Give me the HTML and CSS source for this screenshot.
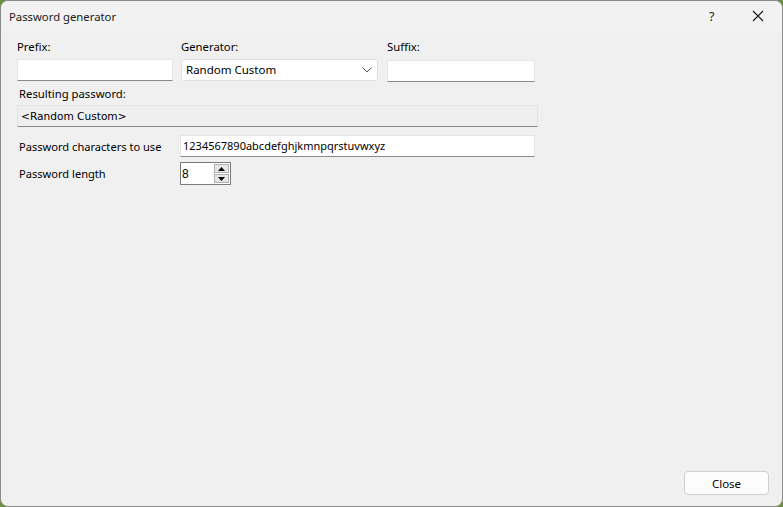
FILE: index.html
```html
<!DOCTYPE html>
<html>
<head>
<meta charset="utf-8">
<link rel="stylesheet" href="styles.css">
</head>
<body>
<div class="window">
  <div class="titlebar">
    <span class="title">Password generator</span>
    <span class="help">?</span>
    <span class="close-x">
      <svg width="12" height="12" viewBox="0 0 12 12"><path d="M1 1 L11 11 M11 1 L1 11" stroke="#1a1a1a" stroke-width="1.1" fill="none"/></svg>
    </span>
  </div>
  <div class="content">
    <div class="top-grid">
      <label class="lbl">Prefix:</label>
      <label class="lbl">Generator:</label>
      <label class="lbl">Suffix:</label>
      <div class="field"></div>
      <div class="combo"><span>Random Custom</span>
        <svg class="chev" width="10" height="6" viewBox="0 0 10 6"><path d="M0.5 0.5 L5 5 L9.5 0.5" stroke="#555" stroke-width="1" fill="none"/></svg>
      </div>
      <div class="field suffix"></div>
    </div>
    <div class="lbl result-lbl">Resulting password:</div>
    <div class="result">&lt;Random Custom&gt;</div>
    <div class="row chars-row">
      <span class="row-lbl">Password characters to use</span>
      <div class="field chars">1234567890abcdefghjkmnpqrstuvwxyz</div>
    </div>
    <div class="row len-row">
      <span class="row-lbl">Password length</span>
      <div class="spinner">
        <span class="spin-val">8</span>
        <div class="spin-btns">
          <div class="spin-btn"><svg width="7" height="4" viewBox="0 0 7 4"><path d="M0 4 L3.5 0 L7 4 Z" fill="#000"/></svg></div>
          <div class="spin-btn"><svg width="7" height="4" viewBox="0 0 7 4"><path d="M0 0 L3.5 4 L7 0 Z" fill="#000"/></svg></div>
        </div>
      </div>
    </div>
    <div class="footer">
      <button class="btn">Close</button>
    </div>
  </div>
</div>
</body>
</html>
```
FILE: styles.css
```css
html, body {
  margin: 0;
  padding: 0;
  background: #6f8f3a;
}
.window {
  box-sizing: border-box;
  width: 783px;
  height: 507px;
  background: #f0f0f0;
  border: 1px solid #8c8c8c;
  border-radius: 8px;
  overflow: hidden;
  display: flex;
  flex-direction: column;
  font-family: "Noto Sans", "Open Sans", sans-serif;
  font-size: 11.2px;
  color: #000;
}
.titlebar {
  height: 30px;
  display: flex;
  align-items: center;
  padding-left: 8px;
  background: #f2f2f2;
}
.title {
  flex: 1;
  font-size: 11.3px;
  color: #1a1a1a;
}
.help {
  width: 12px;
  font-size: 12.5px;
  color: #1a1a1a;
  margin-right: 31px;
}
.close-x {
  display: flex;
  margin-right: 18px;
}
.content {
  flex: 1;
  display: flex;
  flex-direction: column;
  padding: 8px 13px 11px 16px;
}
.top-grid {
  display: grid;
  grid-template-columns: 156px 197px 149px;
  column-gap: 8px;
  row-gap: 4px;
  width: 520px;
}
.top-grid .lbl:nth-child(3) { margin-left: 1px; }
.lbl {
  height: 16px;
  line-height: 16px;
  font-size: 11.3px;
}
.field {
  box-sizing: border-box;
  height: 22px;
  background: #fff;
  border: 1px solid #e5e5e5;
  border-bottom: 1px solid #8a8a8a;
}
.suffix {
  margin-top: 1px;
  margin-left: 1px;
}
.combo {
  box-sizing: border-box;
  height: 22px;
  background: #fff;
  border: 1px solid #e0e0e0;
  border-radius: 3px;
  display: flex;
  align-items: center;
  justify-content: space-between;
  padding: 0 5px 0 4px;
  font-size: 11.5px;
}
.combo span { line-height: 20px; }
.result-lbl {
  margin-top: 4px;
  margin-left: 2px;
}
.result {
  box-sizing: border-box;
  margin-top: 3px;
  width: 521px;
  height: 22px;
  line-height: 20px;
  padding-left: 3px;
  background: #efefef;
  border: 1px solid #e3e3e3;
  border-bottom: 1px solid #8a8a8a;
  font-family: "DejaVu Sans", sans-serif;
  font-size: 10.6px;
}
.row {
  display: flex;
  align-items: center;
}
.row-lbl {
  width: 161px;
  padding-left: 2px;
  font-size: 11.1px;
}
.chars-row { margin-top: 8px; }
.chars {
  width: 355px;
  padding-left: 2px;
  line-height: 20px;
  font-size: 11px;
}
.len-row { margin-top: 5px; }
.spinner {
  box-sizing: border-box;
  width: 51px;
  height: 23px;
  background: #fff;
  border: 1px solid #7a7a7a;
  display: flex;
  justify-content: space-between;
  align-items: center;
  padding: 0 1px 0 1px;
}
.spin-val {
  font-family: "Liberation Sans", sans-serif;
  font-size: 12px;
}
.spin-btns {
  display: flex;
  flex-direction: column;
  gap: 1px;
}
.spin-btn {
  box-sizing: border-box;
  width: 15px;
  height: 9px;
  background: #e6e6e6;
  border: 1px solid #b0b0b0;
  display: flex;
  align-items: center;
  justify-content: center;
}
.footer {
  margin-top: auto;
  display: flex;
  justify-content: flex-end;
}
.btn {
  box-sizing: border-box;
  width: 85px;
  height: 24px;
  background: #fdfdfd;
  border: 1px solid #d0d0d0;
  border-radius: 4px;
  font-family: "Noto Sans", "Open Sans", sans-serif;
  font-size: 11.5px;
  color: #000;
  padding: 0;
}
```
